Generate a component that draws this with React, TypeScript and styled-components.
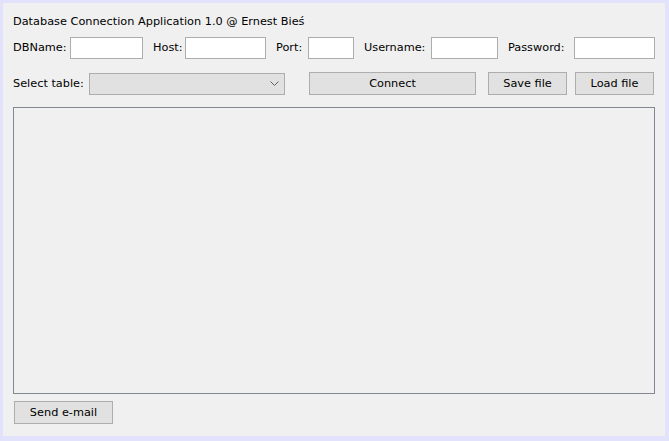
import React from "react";
import styled, { createGlobalStyle } from "styled-components";

const Global = createGlobalStyle`
  html, body { margin: 0; padding: 0; background: #e2e2fc; }
  body { font-family: "DejaVu Sans", Tahoma, sans-serif; font-size: 11.3px; color: #000; }
  * { box-sizing: border-box; }
`;

const Window = styled.div`
  width: 669px;
  height: 441px;
  padding: 3px 4px 5px 3px;
`;

const Panel = styled.div`
  width: 662px;
  height: 433px;
  background: #f0f0f0;
  padding: 10px 10px 12px 10px;
  display: flex;
  flex-direction: column;
`;

const Title = styled.div`
  height: 18px;
  line-height: 18px;
  white-space: nowrap;
`;

const Row = styled.div<{ $top: number; $h: number }>`
  display: flex;
  align-items: center;
  height: ${(p) => p.$h}px;
  margin-top: ${(p) => p.$top}px;
`;

const Label = styled.label<{ $w: number; $ml?: number }>`
  width: ${(p) => p.$w}px;
  margin-left: ${(p) => p.$ml ?? 0}px;
  flex: none;
  white-space: nowrap;
  line-height: 22px;
`;

const Input = styled.input<{ $w: number }>`
  width: ${(p) => p.$w}px;
  height: 22px;
  flex: none;
  border: 1px solid #adadad;
  background: #fff;
  padding: 0 3px;
  font: inherit;
  outline: none;
`;

const Select = styled.div`
  width: 196px;
  height: 22px;
  flex: none;
  border: 1px solid #adadad;
  background: #e1e1e1;
  display: flex;
  align-items: center;
  justify-content: flex-end;
  padding-right: 5px;
`;

const Button = styled.button<{ $w: number; $ml?: number }>`
  width: ${(p) => p.$w}px;
  height: 23px;
  margin-left: ${(p) => p.$ml ?? 0}px;
  flex: none;
  border: 1px solid #adadad;
  background: #e1e1e1;
  font: inherit;
  color: #000;
  padding: 0;
`;

const TextArea = styled.div`
  margin-top: 12px;
  width: 642px;
  height: 287px;
  border: 1px solid #828790;
  background: #f0f0f0;
`;

const Footer = styled.div`
  margin-top: 7px;
  display: flex;
  padding-left: 1px;
`;

export default function App() {
  return (
    <Window>
      <Global />
      <Panel>
        <Title>Database Connection Application 1.0 @ Ernest Bieś</Title>
        <Row $top={6} $h={22}>
          <Label $w={57}>DBName:</Label>
          <Input $w={73} />
          <Label $w={32} $ml={10}>Host:</Label>
          <Input $w={81} />
          <Label $w={32} $ml={10}>Port:</Label>
          <Input $w={46} />
          <Label $w={67} $ml={10}>Username:</Label>
          <Input $w={67} />
          <Label $w={66} $ml={10}>Password:</Label>
          <Input $w={81} />
        </Row>
        <Row $top={13} $h={23}>
          <Label $w={76}>Select table:</Label>
          <Select>
            <svg width="9" height="5" viewBox="0 0 9 5">
              <path d="M0.5 0.5 L4.5 4.5 L8.5 0.5" fill="none" stroke="#606060" strokeWidth="1" />
            </svg>
          </Select>
          <Button $w={167} $ml={24}>Connect</Button>
          <Button $w={79} $ml={12}>Save file</Button>
          <Button $w={79} $ml={8}>Load file</Button>
        </Row>
        <TextArea />
        <Footer>
          <Button $w={99}>Send e-mail</Button>
        </Footer>
      </Panel>
    </Window>
  );
}
